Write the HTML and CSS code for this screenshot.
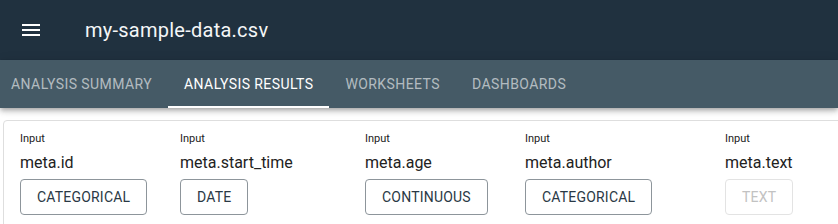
FILE: index.html
```html
<!DOCTYPE html>
<html>
<head>
<meta charset="utf-8">
<link rel="stylesheet" href="styles.css">
</head>
<body>
<div class="page">
  <header class="topbar">
    <svg class="menu-icon" width="18" height="12" viewBox="0 0 18 12"><rect x="0" y="0" width="18" height="2" fill="#fff"/><rect x="0" y="5" width="18" height="2" fill="#fff"/><rect x="0" y="10" width="18" height="2" fill="#fff"/></svg>
    <span class="title">my-sample-data.csv</span>
  </header>
  <nav class="tabbar">
    <div class="tabs">
      <div class="tab">ANALYSIS SUMMARY</div>
      <div class="tab active">ANALYSIS RESULTS</div>
      <div class="tab">WORKSHEETS</div>
      <div class="tab">DASHBOARDS</div>
    </div>
  </nav>
  <main class="content">
    <section class="card">
      <div class="col">
        <div class="label">Input</div>
        <div class="name">meta.id</div>
        <button class="type">CATEGORICAL</button>
      </div>
      <div class="col">
        <div class="label">Input</div>
        <div class="name">meta.start_time</div>
        <button class="type">DATE</button>
      </div>
      <div class="col">
        <div class="label">Input</div>
        <div class="name">meta.age</div>
        <button class="type">CONTINUOUS</button>
      </div>
      <div class="col">
        <div class="label">Input</div>
        <div class="name">meta.author</div>
        <button class="type">CATEGORICAL</button>
      </div>
      <div class="col">
        <div class="label">Input</div>
        <div class="name">meta.text</div>
        <button class="type disabled" disabled>TEXT</button>
      </div>
    </section>
  </main>
</div>
</body>
</html>
```
FILE: styles.css
```css
html, body {
  margin: 0;
  padding: 0;
  background: #ffffff;
  font-family: Roboto, "Liberation Sans", sans-serif;
  overflow: hidden;
}
.page {
  width: 838px;
  overflow: hidden;
}
.topbar {
  height: 60px;
  background: #20313f;
  display: flex;
  align-items: center;
  padding-left: 22px;
}
.menu-icon {
  display: block;
  flex: none;
}
.title {
  margin-left: 45px;
  color: #f4f6f7;
  font-size: 20px;
  font-weight: 400;
  letter-spacing: 0.25px;
}
.tabbar {
  height: 48px;
  background: #455a66;
  box-shadow: 0 2px 4px -1px rgba(0,0,0,0.2), 0 4px 5px 0 rgba(0,0,0,0.14), 0 1px 10px 0 rgba(0,0,0,0.12);
  position: relative;
  z-index: 1;
}
.tabs {
  display: flex;
  height: 48px;
  margin-left: -5px;
}
.tab {
  display: flex;
  align-items: center;
  padding: 0 16px;
  height: 48px;
  box-sizing: border-box;
  font-size: 14px;
  letter-spacing: 0.42px;
  color: rgba(255,255,255,0.6);
}
.tab.active {
  color: #ffffff;
  box-shadow: inset 0 -2px 0 #ffffff;
}
.content {
  padding: 12px 0 0 3px;
}
.card {
  display: grid;
  grid-template-columns: 160px 185px 160px 200px auto;
  margin-right: -40px;
  border: 1px solid #dedede;
  border-radius: 4px;
  padding: 10px 16px 20px 16px;
}
.col {
  display: flex;
  flex-direction: column;
  align-items: flex-start;
}
.label {
  font-size: 11px;
  line-height: 16px;
  color: #222;
}
.name {
  margin-top: 4px;
  font-size: 16px;
  line-height: 24px;
  color: #222;
}
.type {
  margin-top: 4px;
  height: 36px;
  box-sizing: border-box;
  padding: 0 16px;
  border: 1px solid #8d959b;
  border-radius: 4px;
  background: #fff;
  font-family: Roboto, "Liberation Sans", sans-serif;
  font-size: 14px;
  letter-spacing: 0.2px;
  color: #2a3945;
}
.type.disabled {
  border-color: #e3e3e3;
  color: #c2c2c2;
}
```
